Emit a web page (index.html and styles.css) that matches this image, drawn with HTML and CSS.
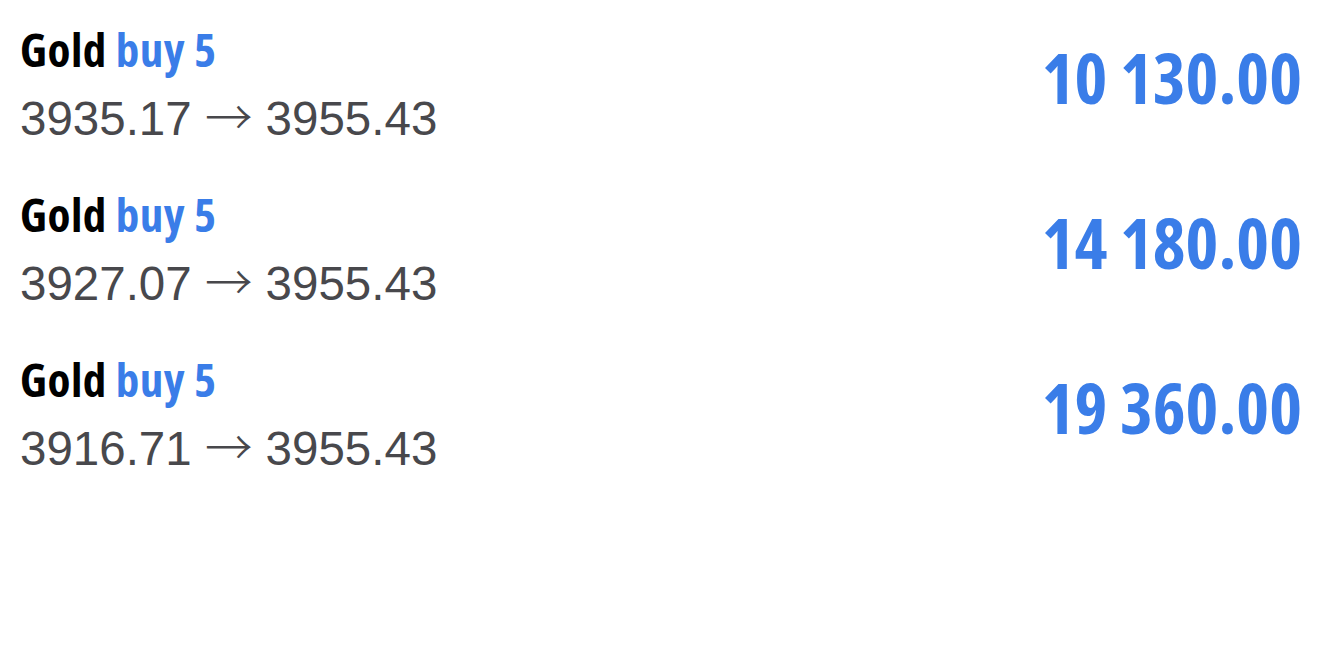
FILE: index.html
```html
<!DOCTYPE html>
<html lang="en">
<head>
<meta charset="utf-8">
<title>Positions</title>
<link rel="stylesheet" href="styles.css">
</head>
<body>
<ul class="list">
  <li class="row">
    <div class="info">
      <div class="title">Gold <span class="side">buy 5</span></div>
      <div class="prices">3935.17 <span class="arrow">→</span> 3955.43</div>
    </div>
    <div class="amount">10 130.00</div>
  </li>
  <li class="row">
    <div class="info">
      <div class="title">Gold <span class="side">buy 5</span></div>
      <div class="prices">3927.07 <span class="arrow">→</span> 3955.43</div>
    </div>
    <div class="amount">14 180.00</div>
  </li>
  <li class="row">
    <div class="info">
      <div class="title">Gold <span class="side">buy 5</span></div>
      <div class="prices">3916.71 <span class="arrow">→</span> 3955.43</div>
    </div>
    <div class="amount">19 360.00</div>
  </li>
</ul>
</body>
</html>
```
FILE: styles.css
```css
html, body {
  margin: 0;
  padding: 0;
  background: #ffffff;
}
.list {
  list-style: none;
  margin: 0;
  padding: 22px 18px 0 20px;
  display: flex;
  flex-direction: column;
}
.row {
  height: 165px;
  display: flex;
  justify-content: space-between;
  align-items: flex-start;
}
.info {
  display: flex;
  flex-direction: column;
}
.title {
  font-family: "Open Sans", "DejaVu Sans Condensed", sans-serif;
  font-weight: 700;
  font-stretch: condensed;
  font-size: 47px;
  line-height: 55px;
  letter-spacing: 0.5px;
  color: #000000;
}
.side {
  color: #3a7de8;
}
.prices {
  margin-top: 10px;
  font-family: "Liberation Sans", Arial, sans-serif;
  font-size: 47.5px;
  line-height: 56px;
  color: #48484c;
}
.arrow {
  font-family: "Noto Sans CJK JP", "Liberation Sans", sans-serif;
  font-weight: 300;
}
.amount {
  margin-top: 20px;
  font-family: "Open Sans", "DejaVu Sans Condensed", sans-serif;
  font-weight: 700;
  font-stretch: condensed;
  font-size: 70px;
  line-height: 70px;
  color: #3a7de8;
}
```
